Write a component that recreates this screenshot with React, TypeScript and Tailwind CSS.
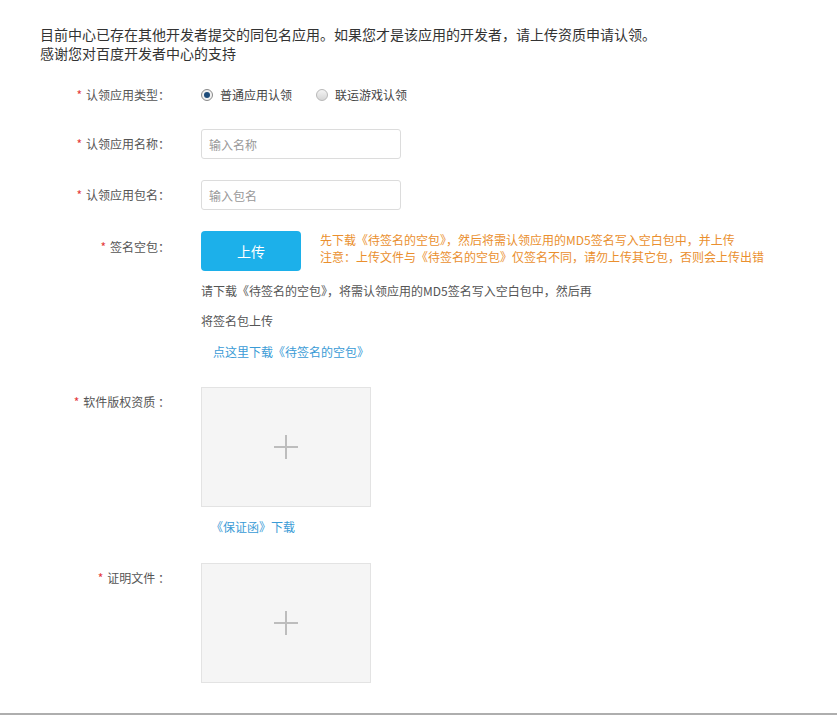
import type { ReactNode } from "react";

const font = { fontFamily: '"Noto Sans CJK SC", "Noto Sans", sans-serif' };

function Label({ children, className = "" }: { children: ReactNode; className?: string }) {
  return (
    <div className={`w-[170px] shrink-0 text-right text-[12px] leading-[18px] text-[#555] ${className}`}>
      <span className="mr-[4px] text-[#e4393c]">*</span>
      {children}
    </div>
  );
}

function Radio({ checked, label }: { checked?: boolean; label: string }) {
  return (
    <label className="flex items-center gap-[7px] text-[12px] leading-[20px] text-[#444]">
      <span
        className={`flex h-[12px] w-[12px] items-center justify-center rounded-full border ${
          checked ? "border-[#8a8a8a] bg-[#f2f2f2]" : "border-[#b8b8b8] bg-gradient-to-b from-[#f4f4f4] to-[#d6d6d6]"
        }`}
      >
        {checked && <span className="h-[6px] w-[6px] rounded-full bg-[#1e4c7a]" />}
      </span>
      {label}
    </label>
  );
}

function UploadBox() {
  return (
    <div className="flex h-[120px] w-[170px] items-center justify-center border border-[#e3e3e3] bg-[#f5f5f5]">
      <svg width="26" height="26" viewBox="0 0 26 26">
        <path d="M13 1v24M1 13h24" stroke="#bdbdbd" strokeWidth="2" />
      </svg>
    </div>
  );
}

export default function App() {
  return (
    <div className="min-h-[715px] bg-white" style={font}>
      <div className="px-[40px] pt-[25px] text-[14px] leading-[19px] text-[#333]">
        <p>目前中心已存在其他开发者提交的同包名应用。如果您才是该应用的开发者，请上传资质申请认领。</p>
        <p>感谢您对百度开发者中心的支持</p>
      </div>

      <div className="mt-[22px] flex items-center">
        <Label>认领应用类型：</Label>
        <div className="ml-[31px] flex items-center gap-[24px]">
          <Radio checked label="普通应用认领" />
          <Radio label="联运游戏认领" />
        </div>
      </div>

      <div className="mt-[24px] flex items-center">
        <Label>认领应用名称：</Label>
        <input
          placeholder="输入名称"
          className="ml-[31px] h-[30px] w-[200px] rounded-[3px] border border-[#dcdcdc] px-[7px] text-[12px] text-[#333] outline-none placeholder:text-[#999]"
        />
      </div>

      <div className="mt-[21px] flex items-center">
        <Label>认领应用包名：</Label>
        <input
          placeholder="输入包名"
          className="ml-[31px] h-[30px] w-[200px] rounded-[3px] border border-[#dcdcdc] px-[7px] text-[12px] text-[#333] outline-none placeholder:text-[#999]"
        />
      </div>

      <div className="mt-[21px] flex items-start">
        <Label className="pt-[7px]">签名空包：</Label>
        <div className="ml-[31px]">
          <div className="flex items-start">
            <button className="h-[40px] w-[100px] rounded-[4px] bg-[#1cb0ea] text-[14px] text-white">上传</button>
            <div className="ml-[19px] text-[12px] leading-[17px] text-[#ea8f2e]">
              <p>先下载《待签名的空包》，然后将需认领应用的MD5签名写入空白包中，并上传</p>
              <p>注意：上传文件与《待签名的空包》仅签名不同，请勿上传其它包，否则会上传出错</p>
            </div>
          </div>
          <div className="mt-[5px] text-[12px] leading-[30px] text-[#555]">
            <p>请下载《待签名的空包》，将需认领应用的MD5签名写入空白包中，然后再</p>
            <p>将签名包上传</p>
          </div>
          <a className="mt-[7px] ml-[12px] block text-[12px] leading-[18px] text-[#3a9bd6]">点这里下载《待签名的空包》</a>
        </div>
      </div>

      <div className="mt-[26px] flex items-start">
        <Label className="pt-[6px]">软件版权资质 ：</Label>
        <div className="ml-[31px]">
          <UploadBox />
          <a className="mt-[11px] ml-[10px] block text-[12px] leading-[18px] text-[#3a9bd6]">《保证函》下载</a>
        </div>
      </div>

      <div className="mt-[27px] flex items-start">
        <Label className="pt-[6px]">证明文件 ：</Label>
        <div className="ml-[31px]">
          <UploadBox />
        </div>
      </div>

      <div className="mt-[30px] h-[2px] bg-[#aeaeae]" />
    </div>
  );
}
